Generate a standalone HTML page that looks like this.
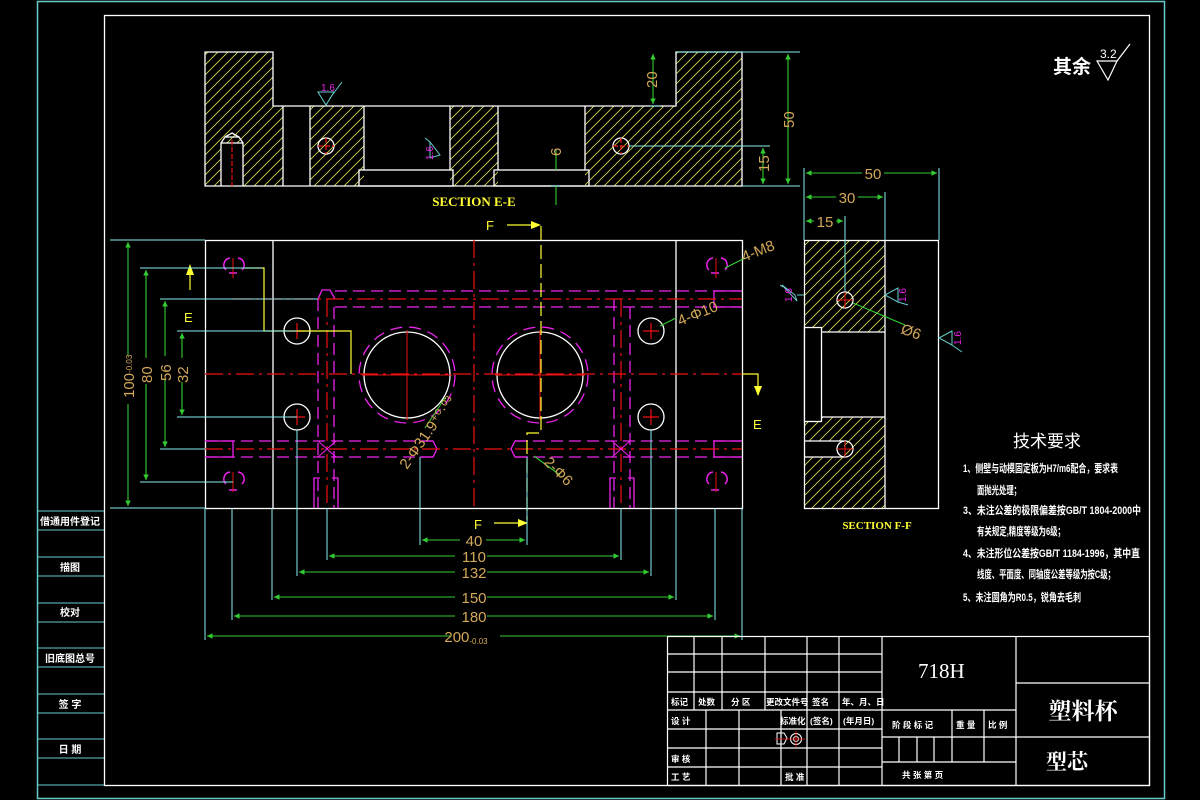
<!DOCTYPE html>
<html><head><meta charset="utf-8"><style>
html,body{margin:0;padding:0;background:#000;}
svg{display:block;}
text{font-family:"Liberation Sans","Noto Sans CJK SC",sans-serif;}
.w{stroke:#fff;stroke-width:1.3;fill:none}
.c{stroke:#8ee;stroke-width:1;fill:none}
.g{stroke:#3c3;stroke-width:1.1;fill:none}
.m{stroke:#e2e;stroke-width:1.3;fill:none;stroke-dasharray:12 6}
.r{stroke:#e11;stroke-width:1.2;fill:none;stroke-dasharray:18 5 3 5}
.y{stroke:#ff3;stroke-width:1.2;fill:none}
.t{fill:#d4a85a;font-size:15px}
.tw{fill:#fff;font-size:10px;font-weight:bold}
.sf{font-family:"Liberation Serif","Noto Serif CJK SC",serif}
</style></head><body>
<svg width="1200" height="800" viewBox="0 0 1200 800" xmlns="http://www.w3.org/2000/svg">
<defs>
<pattern id="h" patternUnits="userSpaceOnUse" width="10" height="10">
<path d="M-1,11 L11,-1 M-6,6 L6,-6 M4,16 L16,4" stroke="#dd5" stroke-width="0.8"/>
</pattern>
<marker id="a" viewBox="0 0 10 10" refX="10" refY="5" markerWidth="7" markerHeight="5" orient="auto-start-reverse"><path d="M0,0 L10,5 L0,10z" fill="#3c3"/></marker>
</defs>
<rect width="1200" height="800" fill="#000"/>
<rect x="37.5" y="1.5" width="1127" height="797" fill="none" stroke="#6cc" stroke-width="1.5"/>
<rect x="104.5" y="15.5" width="1045" height="770" fill="none" stroke="#fff" stroke-width="1.3"/>
<g stroke="#6cc" stroke-width="1">
<path d="M37,511H104M37,530H104M37,557H104M37,576H104M37,603H104M37,622H104M37,648H104M37,667H104M37,694H104M37,713H104M37,739H104M37,758H104M37,785H104"/>
</g>
<g class="tw" text-anchor="middle">
<text x="70" y="525">借通用件登记</text>
<text x="70" y="571">描图</text>
<text x="70" y="616">校对</text>
<text x="70" y="662">旧底图总号</text>
<text x="70" y="708">签 字</text>
<text x="70" y="753">日 期</text>
</g>

<!-- SECTION E-E -->
<path d="M205,52H273V106H676V52H742V186H205Z" fill="url(#h)"/>
<rect x="283" y="106" width="27" height="80" fill="#000"/>
<rect x="364" y="106" width="86" height="80" fill="#000"/>
<rect x="498" y="106" width="87" height="80" fill="#000"/>
<rect x="221" y="143" width="22" height="43" fill="#000"/>
<g class="w">
<path d="M205,52H273V106H676V52H742V186H205Z"/>
<path d="M283,106V186M310,106V186M364,106V170M450,106V170M498,106V170M585,106V170"/>
<rect x="359" y="170" width="94" height="16"/>
<rect x="494" y="170" width="95" height="16"/>
<path d="M221,186V143H243V186M221,143L225,137H239L243,143M225,137L232,133L239,137"/>
<circle cx="326" cy="146" r="8"/><circle cx="621" cy="146" r="8"/>
</g>
<path d="M232,140V186M318,146H334M326,138V154M613,146H629M621,138V154" class="r" style="stroke-dasharray:5 2"/>
<path class="c" d="M676,52H800M742,186H800M629,146H770M551,186H560M650,106H660"/>
<path class="g" d="M653,54V104" marker-start="url(#a)" marker-end="url(#a)"/>
<path class="g" d="M788,54V184" marker-start="url(#a)" marker-end="url(#a)"/>
<path class="g" d="M763,148V184" marker-start="url(#a)" marker-end="url(#a)"/>
<path class="g" d="M556,150V170 M556,186V205"/>
<text class="t" transform="translate(657,88) rotate(-90)" font-size="13">20</text>
<text class="t" transform="translate(794,128) rotate(-90)">50</text>
<text class="t" transform="translate(769,172) rotate(-90)">15</text>
<text class="t" transform="translate(561,156) rotate(-90)" font-size="13">6</text>
<path d="M318,92H334L326,105Z M330,98L342,82" stroke="#6cc" fill="none" stroke-width="1"/>
<text x="321" y="91" fill="#e2e" font-size="10">1.6</text>
<path d="M430,142L440,155L430,158Z M430,142L425,138" stroke="#6cc" fill="none" stroke-width="1"/>
<text transform="translate(433,160) rotate(-90)" fill="#e2e" font-size="10">1.6</text>
<text x="474" y="206" fill="#ff3" font-size="13" font-weight="bold" text-anchor="middle" class="sf">SECTION E-E</text>

<!-- MAIN VIEW -->
<g class="w">
<rect x="205.5" y="240.5" width="537" height="268"/>
<path d="M273,240V508M676,240V508"/>
<circle cx="407" cy="375" r="43"/><circle cx="540" cy="375" r="43"/>
<circle cx="297" cy="331" r="13"/><circle cx="297" cy="417" r="13"/>
<circle cx="651" cy="331" r="13"/><circle cx="651" cy="417" r="13"/>
</g>
<g class="m">
<circle cx="407" cy="375" r="48" style="stroke-dasharray:12 7"/>
<circle cx="540" cy="375" r="48" style="stroke-dasharray:12 7"/>
<path d="M335,291H742M335,307H742M205,441H433M205,457H433M515,441H742M515,457H742"/>
<path d="M318,299V508M334,307V508M614,299V508M630,307V508"/>
<path d="M205,441H233V457H205M742,441H714V457H742M742,291H714V307H742" style="stroke-dasharray:none"/>
<path d="M420,441H433L437,449L433,457H420M528,441H515L511,449L515,457H528" style="stroke-dasharray:none"/>
<path d="M318,299L322,290H330L335,299" style="stroke-dasharray:none"/>
<path d="M314,508V478H320M338,508V478H332M610,508V478H616M634,508V478H628" style="stroke-dasharray:none"/>
</g>
<g class="r">
<path d="M205,374H742M474,240V508M327,299V508M621,299V508M233,299H742M205,449H742"/>
<path d="M407,330V420M362,375H452M540,330V420M495,375H585" style="stroke-dasharray:none" stroke-width="1"/>
<path d="M289,331H305M297,323V339M289,417H305M297,409V425M643,331H659M651,323V339M643,417H659M651,409V425" style="stroke-dasharray:none"/>
</g>
<path d="M318,441L336,457M336,441L318,457M612,441L630,457M630,441L612,457" stroke="#e2e" stroke-width="1"/>
<g stroke="#e2e" stroke-width="1.5" fill="none">
<path d="M226,270A7,7 0 0 1 230,258M238,258A7,7 0 0 1 242,270 M229,273H237"/>
<path d="M709,270A7,7 0 0 1 713,258M721,258A7,7 0 0 1 725,270 M711,273H719"/>
<path d="M226,484A7,7 0 0 1 230,472M238,472A7,7 0 0 1 242,484 M229,490H237"/>
<path d="M709,484A7,7 0 0 1 713,472M721,472A7,7 0 0 1 725,484 M711,490H719"/>
</g>
<path d="M233,258V278M716,258V278M233,472V492M716,472V492" stroke="#e11"/>
<path class="y" d="M245,268H264V331H351V374" />
<path class="y" d="M190,290V268" /><path d="M186,275L190,264L194,275Z" fill="#ff3"/>
<text x="184" y="322" fill="#ff3" font-size="13">E</text>
<path class="y" d="M742,374H758V395"/><path d="M754,386L758,396L762,386Z" fill="#ff3"/>
<text x="753" y="429" fill="#ff3" font-size="13">E</text>
<path class="y" d="M541,226V433H527V520" style="stroke-dasharray:14 5"/>
<path class="y" d="M507,225H535"/><path d="M531,221L541,225L531,229Z" fill="#ff3"/>
<text x="486" y="230" fill="#ff3" font-size="13">F</text>
<path class="y" d="M494,523H522"/><path d="M518,519L528,523L518,527Z" fill="#ff3"/>
<text x="474" y="529" fill="#ff3" font-size="13">F</text>
<path class="g" d="M745,258L725,268M676,318L660,326M445,398L425,428M560,475L534,456" stroke="#3c3"/>
<text class="t" transform="translate(744,262) rotate(-22)">4-M8</text>
<text class="t" transform="translate(680,326) rotate(-22)" font-size="13">4-Φ10</text>
<text class="t" transform="translate(407,470) rotate(-55)" font-size="13">2-Φ31.9⁺⁰·⁰³</text>
<text class="t" transform="translate(543,463) rotate(45)" font-size="13">2-Φ6</text>
<path class="c" d="M110,240H205M140,268H262M160,299H318M177,331H297M177,417H297M160,449H205M140,482H233M110,508H205"/>
<path class="g" d="M128,242V506" marker-start="url(#a)" marker-end="url(#a)"/>
<path class="g" d="M146,270V480" marker-start="url(#a)" marker-end="url(#a)"/>
<path class="g" d="M165,301V447" marker-start="url(#a)" marker-end="url(#a)"/>
<path class="g" d="M182,333V415" marker-start="url(#a)" marker-end="url(#a)"/>
<g fill="#000"><rect x="120" y="356" width="16" height="48"/><rect x="139" y="358" width="14" height="26"/><rect x="158" y="356" width="14" height="24"/><rect x="175" y="358" width="14" height="24"/></g>
<text class="t" transform="translate(134,398) rotate(-90)">100<tspan font-size="8" dy="-2">-0.03</tspan></text>
<text class="t" transform="translate(152,383) rotate(-90)">80</text>
<text class="t" transform="translate(171,381) rotate(-90)">56</text>
<text class="t" transform="translate(188,383) rotate(-90)">32</text>
<path class="c" d="M205,508V640M232,508V620M272,508V600M297,430V576M327,508V560M420,457V545M527,457V545M621,508V560M651,430V576M676,508V600M715,508V620M742,508V640"/>
<path class="g" d="M422,540H525" marker-start="url(#a)" marker-end="url(#a)"/>
<path class="g" d="M329,556H619" marker-start="url(#a)" marker-end="url(#a)"/>
<path class="g" d="M299,572H649" marker-start="url(#a)" marker-end="url(#a)"/>
<path class="g" d="M274,597H674" marker-start="url(#a)" marker-end="url(#a)"/>
<path class="g" d="M234,616H713" marker-start="url(#a)" marker-end="url(#a)"/>
<path class="g" d="M207,636H740" marker-start="url(#a)" marker-end="url(#a)"/>
<g fill="#000"><rect x="460" y="530" width="26" height="18"/><rect x="455" y="547" width="32" height="18"/><rect x="455" y="563" width="32" height="18"/><rect x="455" y="588" width="32" height="18"/><rect x="455" y="607" width="32" height="18"/><rect x="450" y="626" width="50" height="20"/></g>
<g class="t" text-anchor="middle">
<text x="474" y="546">40</text><text x="474" y="562">110</text><text x="474" y="578">132</text>
<text x="474" y="603">150</text><text x="474" y="622">180</text>
<text x="466" y="642">200<tspan font-size="8" dy="2">-0.03</tspan></text>
</g>

<!-- SECTION F-F -->
<rect x="804" y="240" width="81" height="92" fill="url(#h)"/>
<rect x="804" y="417" width="81" height="91" fill="url(#h)"/>
<rect x="804" y="441" width="40" height="16" fill="#000"/>
<g class="w">
<rect x="804.5" y="240.5" width="134" height="268"/>
<path d="M885,240V508M821,332H885M821,417H885"/>
<rect x="804.5" y="327.5" width="17" height="94" fill="#000"/>
<path d="M804,441H844M804,457H844"/>
<circle cx="845" cy="300" r="8"/><circle cx="845" cy="449" r="8"/>
</g>
<path d="M837,300H853M845,292V308M837,449H853M845,441V457" stroke="#e11"/>
<path class="c" d="M804,168V240M939,168V240M885,192V240M845,216V292"/>
<path class="g" d="M806,173H937" marker-start="url(#a)" marker-end="url(#a)"/>
<path class="g" d="M806,197H883" marker-start="url(#a)" marker-end="url(#a)"/>
<path class="g" d="M806,221H843" marker-start="url(#a)" marker-end="url(#a)"/>
<g fill="#000"><rect x="862" y="164" width="22" height="18"/><rect x="836" y="188" width="22" height="18"/><rect x="814" y="212" width="22" height="18"/></g>
<g class="t" text-anchor="middle"><text x="873" y="179">50</text><text x="847" y="203">30</text><text x="825" y="227">15</text></g>
<path class="g" d="M853,303L905,325"/>
<text class="t" x="900" y="333" transform="rotate(20 900 333)">Ø6</text>
<g stroke="#6cc" fill="none" stroke-width="1">
<path d="M782,285L795,295L797,301Z M783,287L780,285 M804,295H797"/>
<path d="M885,295L898,288L898,302Z M898,302L908,305"/>
<path d="M939,338L952,331L952,345Z M952,345L962,352"/>
</g>
<text transform="translate(792,302) rotate(-90)" fill="#e2e" font-size="10">1.6</text>
<text transform="translate(906,302) rotate(-90)" fill="#e2e" font-size="10">1.6</text>
<text transform="translate(961,345) rotate(-90)" fill="#e2e" font-size="10">1.6</text>
<text x="877" y="529" fill="#ff3" font-size="11" font-weight="bold" text-anchor="middle" class="sf">SECTION F-F</text>

<text x="1053" y="73" fill="#fff" font-size="19" font-weight="bold">其余</text>
<path d="M1097,61H1117L1108,80Z M1117,61L1130,44" stroke="#fff" fill="none" stroke-width="1.2"/>
<text x="1100" y="58" fill="#fff" font-size="12">3.2</text>

<g fill="#fff" font-size="11" font-weight="bold">
<text x="1047" y="447" font-size="17" font-weight="normal" text-anchor="middle">技术要求</text>
<text x="963" y="472" textLength="155" lengthAdjust="spacingAndGlyphs">1、侧壁与动模固定板为H7/m6配合，要求表</text>
<text x="977" y="494" textLength="44" lengthAdjust="spacingAndGlyphs">面抛光处理；</text>
<text x="963" y="514" textLength="178" lengthAdjust="spacingAndGlyphs">3、未注公差的极限偏差按GB/T 1804-2000中</text>
<text x="977" y="535" textLength="88" lengthAdjust="spacingAndGlyphs">有关规定,精度等级为6级；</text>
<text x="963" y="557" textLength="177" lengthAdjust="spacingAndGlyphs">4、未注形位公差按GB/T 1184-1996，其中直</text>
<text x="977" y="578" textLength="138" lengthAdjust="spacingAndGlyphs">线度、平面度、同轴度公差等级为按C级；</text>
<text x="963" y="601" textLength="118" lengthAdjust="spacingAndGlyphs">5、未注圆角为R0.5，锐角去毛刺</text>
</g>

<g stroke="#fff" stroke-width="1.2" fill="none">
<rect x="667.5" y="636.5" width="482" height="149"/>
<path d="M667,654H882M667,672H882M667,692H882M667,710H1016M667,729H882M667,748H882M667,767H882"/>
<path d="M694,636V710M722,636V710M765,636V710M807,636V785M839,636V785M882,636V785"/>
<path d="M706,710V785M739,710V785M781,710V785"/>
<path d="M882,737H1016M882,762H1016M952,710V762M984,710V762M899,737V762M917,737V762M934,737V762"/>
<path d="M1016,636V785M1016,683H1150M1016,737H1150"/>
</g>
<text x="918" y="678" fill="#fff" font-size="21" class="sf">718H</text>
<text x="1083" y="719" fill="#fff" font-size="23" font-weight="bold" text-anchor="middle" class="sf">塑料杯</text>
<text x="1067" y="769" fill="#fff" font-size="21" font-weight="bold" text-anchor="middle" class="sf">型芯</text>
<g fill="#fff" font-size="8.5" font-weight="bold">
<text x="671" y="705">标记</text><text x="698" y="705">处数</text><text x="731" y="705">分 区</text>
<text x="766" y="705">更改文件号</text><text x="812" y="705">签名</text><text x="842" y="705">年、月、日</text>
<text x="671" y="724">设 计</text><text x="780" y="724">标准化</text><text x="810" y="724">(签名)</text><text x="843" y="724">(年月日)</text>
<text x="671" y="762">审 核</text><text x="671" y="780">工 艺</text><text x="785" y="780">批 准</text>
<text x="892" y="728">阶 段 标 记</text><text x="956" y="728">重 量</text><text x="988" y="728">比 例</text>
<text x="902" y="778">共    张    第    页</text>
</g>
<path d="M777,733H784L787,738L784,744H777Z" stroke="#fff" fill="none"/>
<circle cx="796" cy="739" r="5.5" stroke="#fff" fill="none"/><circle cx="796" cy="739" r="2.5" stroke="#fff" fill="none"/>
<path d="M775,739H805M796,731V747" stroke="#e11" stroke-width="0.8"/>
</svg>
</body></html>
